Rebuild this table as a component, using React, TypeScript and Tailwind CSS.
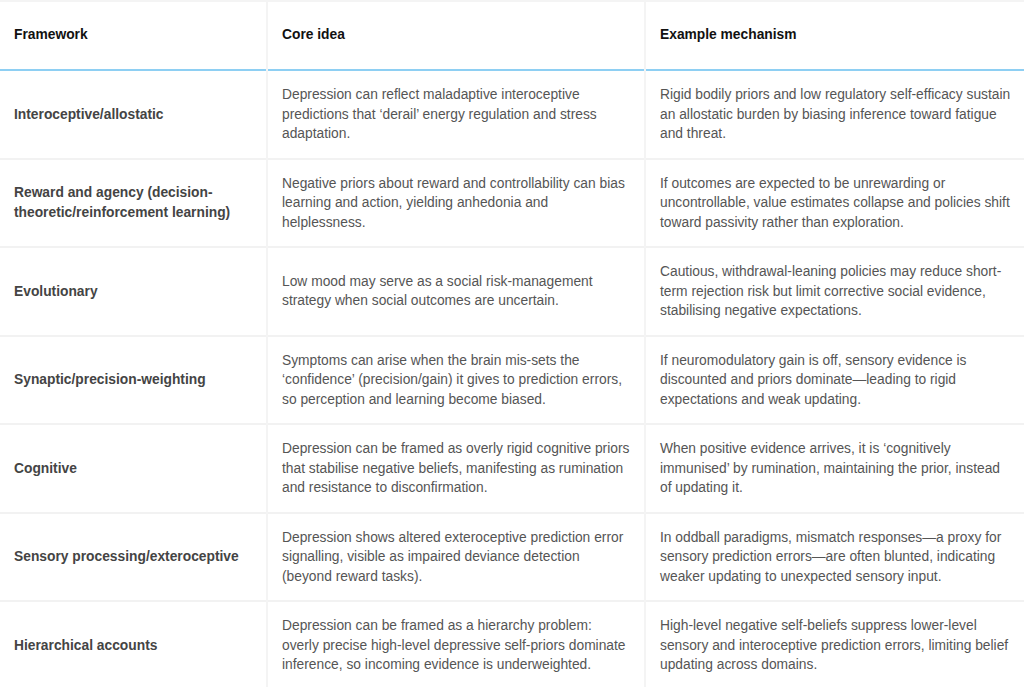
type Row = { name: string[]; idea: string[]; mech: string[] };

// line breaks follow the source layout
const rows: Row[] = [
  {
    name: ["Interoceptive/allostatic"],
    idea: [
      "Depression can reflect maladaptive interoceptive",
      "predictions that ‘derail’ energy regulation and stress",
      "adaptation.",
    ],
    mech: [
      "Rigid bodily priors and low regulatory self-efficacy sustain",
      "an allostatic burden by biasing inference toward fatigue",
      "and threat.",
    ],
  },
  {
    name: ["Reward and agency (decision-", "theoretic/reinforcement learning)"],
    idea: [
      "Negative priors about reward and controllability can bias",
      "learning and action, yielding anhedonia and",
      "helplessness.",
    ],
    mech: [
      "If outcomes are expected to be unrewarding or",
      "uncontrollable, value estimates collapse and policies shift",
      "toward passivity rather than exploration.",
    ],
  },
  {
    name: ["Evolutionary"],
    idea: ["Low mood may serve as a social risk-management", "strategy when social outcomes are uncertain."],
    mech: [
      "Cautious, withdrawal-leaning policies may reduce short-",
      "term rejection risk but limit corrective social evidence,",
      "stabilising negative expectations.",
    ],
  },
  {
    name: ["Synaptic/precision-weighting"],
    idea: [
      "Symptoms can arise when the brain mis-sets the",
      "‘confidence’ (precision/gain) it gives to prediction errors,",
      "so perception and learning become biased.",
    ],
    mech: [
      "If neuromodulatory gain is off, sensory evidence is",
      "discounted and priors dominate—leading to rigid",
      "expectations and weak updating.",
    ],
  },
  {
    name: ["Cognitive"],
    idea: [
      "Depression can be framed as overly rigid cognitive priors",
      "that stabilise negative beliefs, manifesting as rumination",
      "and resistance to disconfirmation.",
    ],
    mech: [
      "When positive evidence arrives, it is ‘cognitively",
      "immunised’ by rumination, maintaining the prior, instead",
      "of updating it.",
    ],
  },
  {
    name: ["Sensory processing/exteroceptive"],
    idea: [
      "Depression shows altered exteroceptive prediction error",
      "signalling, visible as impaired deviance detection",
      "(beyond reward tasks).",
    ],
    mech: [
      "In oddball paradigms, mismatch responses—a proxy for",
      "sensory prediction errors—are often blunted, indicating",
      "weaker updating to unexpected sensory input.",
    ],
  },
  {
    name: ["Hierarchical accounts"],
    idea: [
      "Depression can be framed as a hierarchy problem:",
      "overly precise high-level depressive self-priors dominate",
      "inference, so incoming evidence is underweighted.",
    ],
    mech: [
      "High-level negative self-beliefs suppress lower-level",
      "sensory and interoceptive prediction errors, limiting belief",
      "updating across domains.",
    ],
  },
];

function Lines({ lines }: { lines: string[] }) {
  return (
    <>
      {lines.map((l) => (
        <span key={l} className="block whitespace-nowrap">
          {l}
        </span>
      ))}
    </>
  );
}

export default function App() {
  return (
    <div className="min-h-screen overflow-hidden bg-white font-['Liberation_Sans',Arial,sans-serif] text-[13.8px]">
      <table className="w-[1024px] table-fixed border-collapse border-t-2 border-t-[#f4f4f4]">
        <colgroup>
          <col className="w-[267px]" />
          <col className="w-[378px]" />
          <col className="w-[379px]" />
        </colgroup>
        <thead>
          <tr className="h-[69px] border-b-2 border-b-[#8ecff3]">
            <th className="px-[14px] text-left align-middle font-bold text-[#111]">Framework</th>
            <th className="border-l-2 border-l-[#f4f4f4] px-[14px] text-left align-middle font-bold text-[#111]">
              Core idea
            </th>
            <th className="border-l-2 border-l-[#f4f4f4] px-[14px] text-left align-middle font-bold text-[#111]">
              Example mechanism
            </th>
          </tr>
        </thead>
        <tbody>
          {rows.map((r) => (
            <tr key={r.name[0]} className="border-b-2 border-b-[#f2f2f2]">
              <td className="h-[87px] pl-[14px] pr-[8px] align-middle font-bold leading-[19.5px] text-[#444]">
                <Lines lines={r.name} />
              </td>
              <td className="border-l-2 border-l-[#f4f4f4] py-[14px] pl-[14px] pr-[8px] align-middle leading-[19.5px] text-[#555]">
                <Lines lines={r.idea} />
              </td>
              <td className="border-l-2 border-l-[#f4f4f4] py-[14px] pl-[14px] pr-[8px] align-middle leading-[19.5px] text-[#555]">
                <Lines lines={r.mech} />
              </td>
            </tr>
          ))}
        </tbody>
      </table>
    </div>
  );
}
